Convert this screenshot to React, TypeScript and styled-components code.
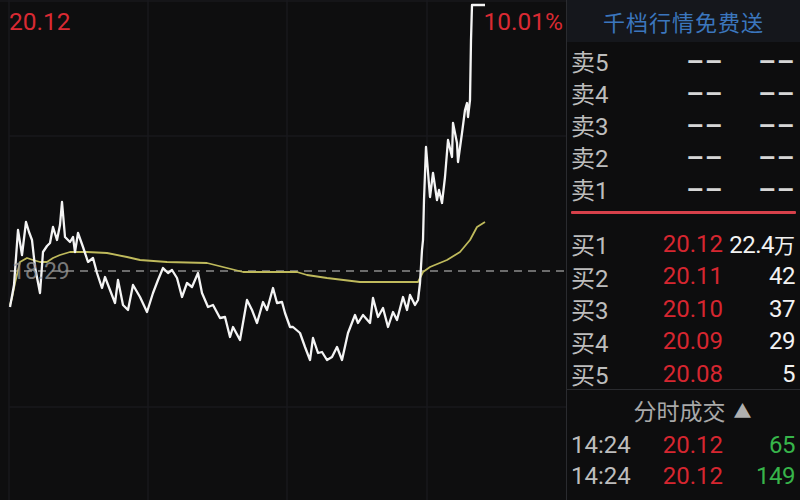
import React from "react";
import styled, { createGlobalStyle } from "styled-components";

const GlobalStyle = createGlobalStyle`
  html, body {
    margin: 0;
    padding: 0;
    background: #0e0e0f;
  }
  body {
    font-family: Roboto, "Noto Sans CJK SC", sans-serif;
  }
`;

const priceLine: [number, number][] = [
  [10, 307], [14, 285], [18, 230], [22, 255], [26, 222], [29, 232], [32, 240], [35, 267],
  [40, 293], [43, 252], [47, 246], [50, 243], [53, 227], [57, 240], [60, 225], [62, 202],
  [65, 237], [70, 242], [73, 237], [75, 252], [78, 233], [83, 247], [88, 262], [93, 258],
  [97, 273], [102, 288], [105, 277], [110, 290], [115, 303], [118, 280], [123, 305], [128, 310],
  [133, 285], [140, 297], [147, 312], [153, 293], [158, 280], [163, 268], [168, 273], [172, 270],
  [177, 278], [182, 297], [187, 283], [192, 287], [198, 273], [202, 293], [208, 307], [213, 305],
  [220, 318], [225, 317], [230, 337], [233, 327], [240, 340], [247, 300], [252, 310], [257, 323],
  [263, 302], [267, 310], [273, 288], [277, 303], [282, 302], [285, 313], [290, 327], [293, 327],
  [300, 333], [305, 347], [310, 360], [313, 338], [318, 353], [322, 352], [327, 360], [332, 357],
  [337, 347], [342, 360], [348, 333], [355, 315], [358, 323], [363, 315], [370, 323], [373, 298],
  [378, 317], [383, 308], [388, 327], [393, 312], [397, 320], [403, 297], [407, 310], [410, 295],
  [415, 305], [418, 300], [420, 283], [422, 250], [423, 240], [424, 200], [426, 147], [430, 197],
  [433, 173], [437, 200], [439, 190], [442, 203], [445, 177], [448, 140], [452, 157], [453, 123],
  [457, 143], [458, 162], [462, 133], [465, 110], [467, 103], [468, 117], [470, 100], [471, 40],
  [472, 5], [485, 5],
];

const avgLine: [number, number][] = [
  [10, 305], [12, 298], [15, 283], [20, 262], [27, 258], [33, 260], [40, 262], [47, 262],
  [53, 258], [60, 255], [70, 252], [87, 252], [107, 253], [127, 257], [140, 260], [167, 262],
  [207, 263], [227, 268], [243, 272], [270, 272], [297, 272], [307, 275], [327, 278], [360, 282],
  [418, 282], [423, 272], [430, 267], [447, 260], [460, 252], [470, 240], [477, 227], [485, 222],
];

const toPoints = (pts: [number, number][]) => pts.map(([x, y]) => `${x},${y}`).join(" ");

const sells = ["卖5", "卖4", "卖3", "卖2", "卖1"];
const buys = [
  { label: "买1", price: "20.12", vol: "22.4", unit: "万" },
  { label: "买2", price: "20.11", vol: "42" },
  { label: "买3", price: "20.10", vol: "37" },
  { label: "买4", price: "20.09", vol: "29" },
  { label: "买5", price: "20.08", vol: "5" },
];
const trades = [
  { time: "14:24", price: "20.12", vol: "65" },
  { time: "14:24", price: "20.12", vol: "149" },
];

const App = () => {
  return (
    <>
      <GlobalStyle />
      <Screen>
        <ChartArea>
          <ChartSvg viewBox="0 0 566 500">
            <g stroke="#19191c" strokeWidth="1.5">
              <line x1="0" y1="1" x2="566" y2="1" />
              {[9, 148, 287, 427].map((x) => (
                <line key={x} x1={x} y1="0" x2={x} y2="500" />
              ))}
              {[136, 407].map((y) => (
                <line key={y} x1="9" y1={y} x2="566" y2={y} />
              ))}
            </g>
            <line
              x1="10"
              y1="271"
              x2="566"
              y2="271"
              stroke="#8c8c8c"
              strokeWidth="1.5"
              strokeDasharray="8 6"
            />
            <polyline
              points={toPoints(avgLine)}
              fill="none"
              stroke="#bfba5c"
              strokeWidth="1.8"
              strokeLinejoin="round"
            />
            <polyline
              points={toPoints(priceLine)}
              fill="none"
              stroke="#f4f4f4"
              strokeWidth="2.3"
              strokeLinejoin="round"
            />
          </ChartSvg>
          <PriceTag $side="left">20.12</PriceTag>
          <PriceTag $side="right">10.01%</PriceTag>
          <PrevClose>18.29</PrevClose>
        </ChartArea>

        <Panel>
          <PromoBar>千档行情免费送</PromoBar>
          <QuoteList $top={1}>
            {sells.map((s) => (
              <QuoteRow key={s} $height={32}>
                <Label>{s}</Label>
                <Dash>--</Dash>
                <Dash>--</Dash>
              </QuoteRow>
            ))}
          </QuoteList>
          <SpreadBar />
          <QuoteList $top={12}>
            {buys.map((b) => (
              <QuoteRow key={b.label} $height={32.5}>
                <Label>{b.label}</Label>
                <Price>{b.price}</Price>
                <Volume>
                  {b.vol}
                  {b.unit && <Unit>{b.unit}</Unit>}
                </Volume>
              </QuoteRow>
            ))}
          </QuoteList>
          <TradeHeader>
            分时成交<Caret>▲</Caret>
          </TradeHeader>
          <QuoteList $top={0}>
            {trades.map((t, i) => (
              <QuoteRow key={i} $height={31}>
                <Label>{t.time}</Label>
                <Price>{t.price}</Price>
                <Volume $green>{t.vol}</Volume>
              </QuoteRow>
            ))}
          </QuoteList>
        </Panel>
      </Screen>
    </>
  );
};

const Screen = styled.div`
  display: flex;
  width: 800px;
  height: 500px;
  overflow: hidden;
  background: #0e0e0f;
`;

const ChartArea = styled.div`
  position: relative;
  width: 566px;
  height: 500px;
  flex-shrink: 0;
`;

const ChartSvg = styled.svg`
  display: block;
  width: 566px;
  height: 500px;
`;

const PriceTag = styled.span<{ $side: "left" | "right" }>`
  position: absolute;
  top: 6px;
  ${({ $side }) => ($side === "left" ? "left: 9px;" : "right: 3px;")}
  color: #d92a33;
  font-size: 24.5px;
  line-height: 32px;
`;

const PrevClose = styled.span`
  position: absolute;
  left: 12px;
  top: 257px;
  color: rgba(150, 150, 150, 0.8);
  font-size: 23px;
  line-height: 30px;
`;

const Panel = styled.div`
  flex: 1;
  display: flex;
  flex-direction: column;
  border-left: 1px solid #2a2b2f;
  background: #0d0d0e;
`;

const PromoBar = styled.div`
  height: 42px;
  display: flex;
  align-items: center;
  justify-content: center;
  background: #15171c;
  color: #3b76bd;
  font-size: 22px;
  letter-spacing: 1px;
`;

const QuoteList = styled.div<{ $top: number }>`
  display: flex;
  flex-direction: column;
  padding: ${({ $top }) => $top}px 5px 0 4px;
`;

const QuoteRow = styled.div<{ $height: number }>`
  display: grid;
  grid-template-columns: 1fr 92px 72px;
  align-items: center;
  height: ${({ $height }) => $height}px;
  font-size: 24px;
`;

const Label = styled.span`
  color: #bdbdbd;
  white-space: nowrap;
`;

const Price = styled.span`
  color: #d62630;
  text-align: right;
`;

const Volume = styled.span<{ $green?: boolean }>`
  color: ${({ $green }) => ($green ? "#37b54a" : "#f2f2f2")};
  text-align: right;
  white-space: nowrap;
  letter-spacing: -0.5px;
`;

const Unit = styled.span`
  font-size: 21px;
  letter-spacing: 0;
`;

const Dash = styled.span`
  justify-self: end;
  display: inline-block;
  color: #d6d6d6;
  font-weight: bold;
  letter-spacing: -0.6px;
  margin-right: 0.6px;
  transform: scaleX(2.1);
  transform-origin: right center;
`;

const SpreadBar = styled.div`
  height: 3px;
  margin: 8px 4px 0 4px;
  background: #d6404a;
  border-radius: 1px;
`;

const TradeHeader = styled.div`
  height: 40px;
  display: flex;
  align-items: center;
  justify-content: center;
  gap: 8px;
  border-top: 1px solid #2a2b2f;
  color: #a9a9a9;
  font-size: 23px;
  padding-left: 18px;
`;

const Caret = styled.span`
  font-size: 18px;
  color: #b0b0b0;
`;

export default App;
